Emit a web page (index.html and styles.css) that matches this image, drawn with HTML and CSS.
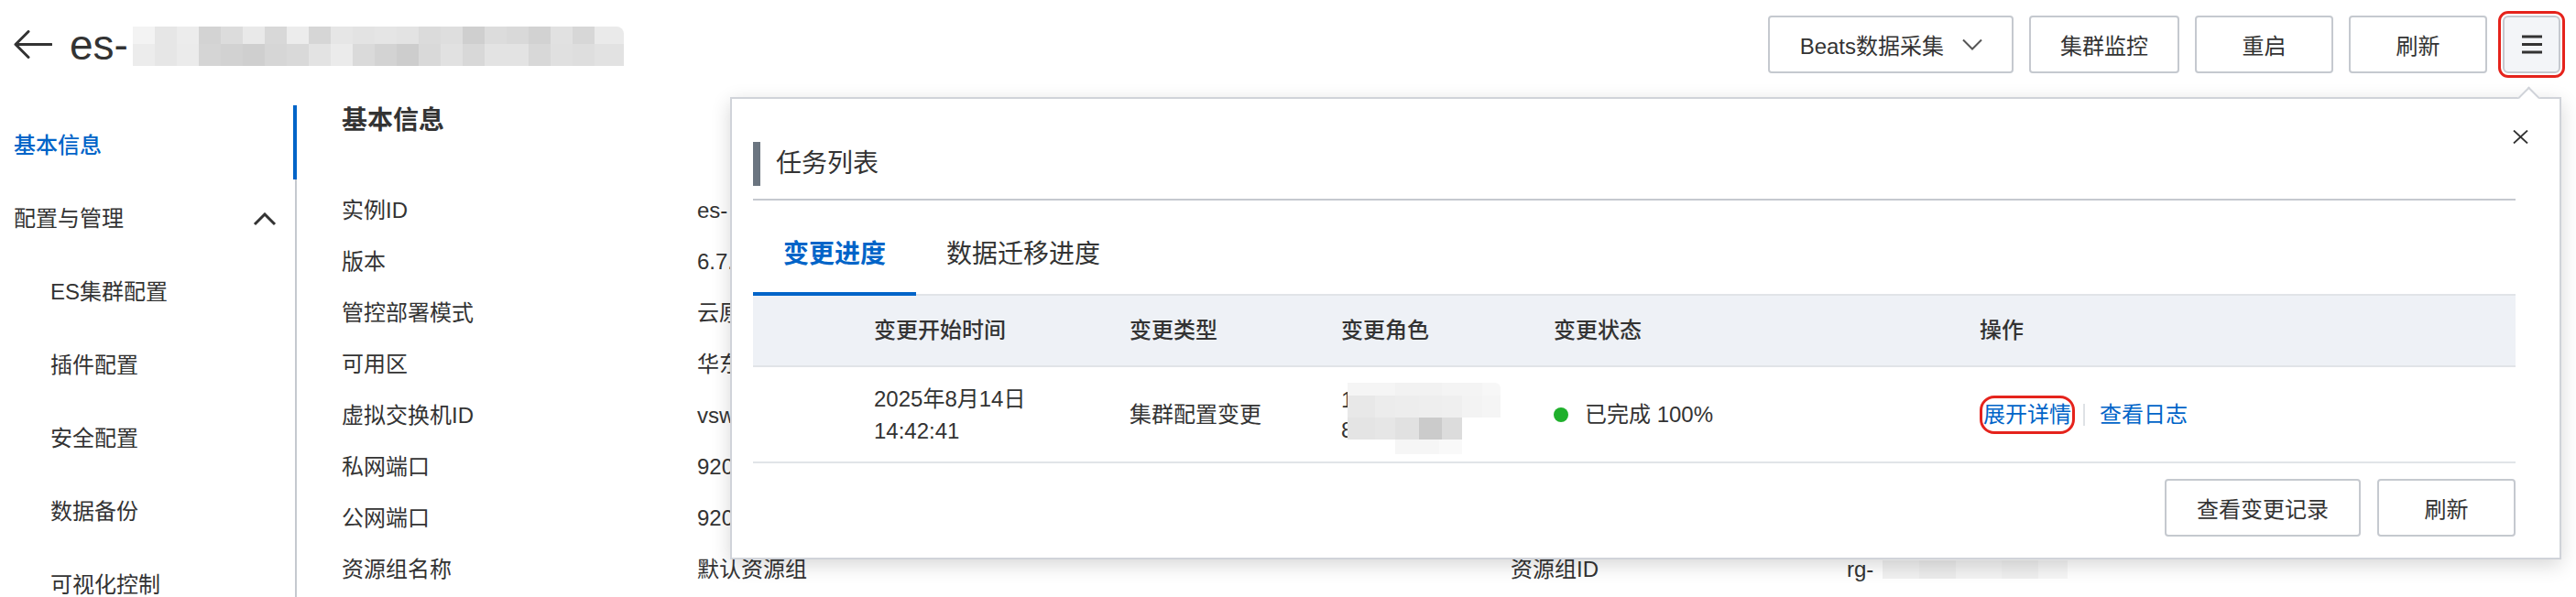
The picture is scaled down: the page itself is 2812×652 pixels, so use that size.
FILE: index.html
```html
<!DOCTYPE html>
<html lang="zh-CN">
<head>
<meta charset="utf-8">
<title>es- 基本信息</title>
<link rel="stylesheet" href="styles.css">
</head>
<body>
<div class="page">
  <header class="topbar">
    <svg class="back" viewBox="0 0 43 31" width="43" height="31"><path d="M42 15.5H3M17 1.5L3 15.5L17 29.5" fill="none" stroke="#333" stroke-width="3" stroke-linecap="round" stroke-linejoin="round"/></svg>
    <div class="title">
      <span class="title-text">es-</span>
      <span class="blur-title"><span class="br br-a"></span><span class="br br-b"></span></span>
    </div>
    <div class="actions">
      <button class="btn btn-drop">Beats数据采集<svg class="chev-down" viewBox="0 0 22 13" width="22" height="13"><polyline points="1,1.5 11,11.5 21,1.5" fill="none" stroke="#555" stroke-width="2"/></svg></button>
      <button class="btn">集群监控</button>
      <button class="btn">重启</button>
      <button class="btn">刷新</button>
      <button class="btn btn-menu"><svg viewBox="0 0 22 21" width="22" height="21"><path d="M0 2H22M0 10.5H22M0 19H22" stroke="#333" stroke-width="3"/></svg></button>
    </div>
  </header>

  <div class="main">
    <nav class="side">
      <div class="nav-item active">基本信息</div>
      <div class="nav-item group">配置与管理<svg class="chev-up" viewBox="0 0 26 15" width="26" height="15"><polyline points="2,13 13,2 24,13" fill="none" stroke="#333" stroke-width="3"/></svg></div>
      <div class="nav-item sub">ES集群配置</div>
      <div class="nav-item sub">插件配置</div>
      <div class="nav-item sub">安全配置</div>
      <div class="nav-item sub">数据备份</div>
      <div class="nav-item sub">可视化控制</div>
    </nav>
    <section class="content">
      <h2 class="content-title">基本信息</h2>
      <div class="info-grid">
        <div class="lbl">实例ID</div><div class="val">es-</div><div></div><div></div>
        <div class="lbl">版本</div><div class="val">6.7.</div><div></div><div></div>
        <div class="lbl">管控部署模式</div><div class="val">云原</div><div></div><div></div>
        <div class="lbl">可用区</div><div class="val">华东</div><div></div><div></div>
        <div class="lbl">虚拟交换机ID</div><div class="val">vsw</div><div></div><div></div>
        <div class="lbl">私网端口</div><div class="val">920</div><div></div><div></div>
        <div class="lbl">公网端口</div><div class="val">920</div><div></div><div></div>
        <div class="lbl">资源组名称</div><div class="val">默认资源组</div><div class="lbl">资源组ID</div><div class="val rg">rg-<span class="rg-blur"></span></div>
      </div>
    </section>
  </div>

  <div class="popover">
    <span class="pop-arrow"></span>
    <svg class="pop-close" viewBox="0 0 17 15" width="17" height="15"><path d="M1 0.5L16 14.5M16 0.5L1 14.5" stroke="#333" stroke-width="1.8"/></svg>
    <div class="pop-title"><span class="pop-bar"></span><span class="pop-title-text">任务列表</span></div>
    <div class="pop-divider"></div>
    <div class="tabs">
      <div class="tab active">变更进度</div>
      <div class="tab">数据迁移进度</div>
    </div>
    <div class="tbl-head">
      <div></div>
      <div>变更开始时间</div>
      <div>变更类型</div>
      <div>变更角色</div>
      <div>变更状态</div>
      <div>操作</div>
    </div>
    <div class="tbl-row">
      <div></div>
      <div class="cell-date">2025年8月14日<br>14:42:41</div>
      <div>集群配置变更</div>
      <div class="role">1<br>8
        <span class="role-blur"><span class="rb rb-a"></span><span class="rb rb-b"></span><span class="rb rb-c"></span><span class="rb rb-d"></span></span>
      </div>
      <div class="status"><span class="dot"></span>已完成 100%</div>
      <div class="ops"><span class="link hl">展开详情</span><span class="sep"></span><span class="link">查看日志</span></div>
    </div>
    <div class="pop-foot">
      <button class="btn btn-wide">查看变更记录</button>
      <button class="btn">刷新</button>
    </div>
  </div>
</div>
</body>
</html>
```

FILE: styles.css
```css
* { box-sizing: border-box; }
html, body { margin: 0; padding: 0; overflow: hidden; background: #fff; }
body {
  font-family: "Liberation Sans", "Noto Sans CJK SC", sans-serif;
  color: #333;
  font-size: 24px;
  line-height: 1.4;
}
.page { position: relative; width: 2812px; height: 652px; overflow: hidden; }

/* top bar */
.topbar { display: flex; align-items: center; height: 97px; padding: 0 17px 0 14px; }
.back { flex: none; display: block; }
.title { display: flex; align-items: center; margin-left: 19px; }
.title-text { font-size: 46px; line-height: 52px; color: #333; }
.blur-title { display: flex; flex-direction: column; width: 536px; height: 43px; margin-left: 5px; margin-top: 3px; }
.br { display: block; }
.br-a {
  height: 19px;
  border-top-right-radius: 8px;
  background: linear-gradient(to right,
    #f3f3f3 0 24px, #e6e6e6 24px 48px, #ececec 48px 72px, #d3d3d3 72px 96px, #dcdcdc 96px 120px,
    #e9e9e9 120px 144px, #d8d8d8 144px 168px, #ececec 168px 192px, #d6d6d6 192px 216px, #e6e6e6 216px 240px,
    #e3e3e3 240px 264px, #e5e5e5 264px 288px, #e3e3e3 288px 312px, #dbdbdb 312px 336px, #dedede 336px 360px,
    #cfcfcf 360px 384px, #dcdcdc 384px 408px, #d9d9d9 408px 432px, #d2d2d2 432px 456px, #e1e1e1 456px 480px,
    #d7d7d7 480px 504px, #eaeaea 504px 536px);
}
.br-b {
  height: 24px;
  background: linear-gradient(to right,
    #ececec 0 24px, #e6e6e6 24px 48px, #ebebeb 48px 72px, #d5d5d5 72px 96px, #d2d2d2 96px 120px,
    #cfcfcf 120px 144px, #d6d6d6 144px 168px, #d9d9d9 168px 192px, #e3e3e3 192px 216px, #ebebeb 216px 240px,
    #dadada 240px 264px, #d3d3d3 264px 288px, #cdcdcd 288px 312px, #d9d9d9 312px 336px, #e1e1e1 336px 360px,
    #d8d8d8 360px 384px, #e3e3e3 384px 408px, #e3e3e3 408px 432px, #d8d8d8 432px 456px, #e0e0e0 456px 480px,
    #dedede 480px 504px, #e2e2e2 504px 536px);
}
.actions { margin-left: auto; display: flex; align-items: center; gap: 17px; }

.btn {
  height: 63px;
  min-width: 151px;
  padding: 0 32px;
  border: 2px solid #c5c9cf;
  border-radius: 4px;
  background: #fff;
  font-family: inherit;
  font-size: 24px;
  color: #333;
  display: flex;
  align-items: center;
  justify-content: center;
  white-space: nowrap;
}
.btn-drop { padding: 0 32px 0 33px; }
.chev-down { margin-left: 20px; display: block; }
.btn-menu {
  min-width: 0;
  width: 63px;
  padding: 0;
  background: #f3f5f8;
  border-radius: 6px;
  outline: 3px solid #e5231c;
  outline-offset: 2px;
}
.btn-menu svg { display: block; }
.btn-wide { padding: 0 33px; }

/* main area */
.main { display: flex; margin-top: 19px; }
.side {
  width: 324px;
  flex: none;
  border-right: 2px solid #c5c9cf;
  padding-top: 3px;
}
.nav-item {
  position: relative;
  height: 80px;
  display: flex;
  align-items: center;
  padding: 0 20px 0 15px;
  font-size: 24px;
  color: #333;
}
.nav-item.active { color: #0064c8; font-weight: 500; }
.nav-item.active::after {
  content: "";
  position: absolute;
  right: -2px;
  top: -4px;
  width: 4px;
  height: 81px;
  background: #0064c8;
}
.nav-item.group { justify-content: space-between; }
.chev-up { display: block; }
.nav-item.sub { padding-left: 55px; }

.content { flex: 1; padding-left: 49px; }
.content-title { margin: 0; font-size: 28px; line-height: 32px; font-weight: 700; color: #333; }
.info-grid {
  display: grid;
  grid-template-columns: 388px 888px 367px 1fr;
  grid-auto-rows: 56px;
  align-items: center;
  margin-top: 54px;
}
.lbl, .val { font-size: 24px; color: #333; white-space: nowrap; }
.rg { display: flex; align-items: center; }
.rg-blur {
  display: inline-block;
  width: 202px;
  height: 20px;
  margin-left: 10px;
  background: linear-gradient(to right, #f1f1f1 0 40px, #ececec 40px 80px, #f3f3f3 80px 130px, #efefef 130px 170px, #f6f6f6 170px 202px);
}

/* popover */
.popover {
  position: absolute;
  left: 797px;
  top: 106px;
  width: 1999px;
  height: 505px;
  border: 2px solid #d0d3d9;
  background: #fff;
  box-shadow: 0 6px 20px rgba(0, 0, 0, 0.16);
  padding: 47px 48px 23px 23px;
  z-index: 5;
}
.pop-arrow {
  position: absolute;
  top: -10px;
  left: 1953px;
  width: 17px;
  height: 17px;
  background: #fff;
  border-top: 2px solid #d0d3d9;
  border-left: 2px solid #d0d3d9;
  transform: rotate(45deg);
}
.pop-close { position: absolute; top: 34px; right: 34px; display: block; }
.pop-title { display: flex; align-items: center; height: 48px; }
.pop-bar { width: 8px; height: 48px; background: #6b7580; }
.pop-title-text { margin-left: 17px; font-size: 28px; color: #333; }
.pop-divider { height: 2px; background: #c5c9cf; margin-top: 14px; }

.tabs { display: flex; height: 104px; border-bottom: 2px solid #e1e4e8; }
.tab {
  height: 104px;
  margin-bottom: -2px;
  padding: 18px 33px 0;
  display: flex;
  align-items: center;
  font-size: 28px;
  color: #333;
  border-bottom: 4px solid transparent;
}
.tab.active { color: #0064c8; font-weight: 700; border-bottom-color: #0064c8; }

.tbl-head, .tbl-row {
  display: grid;
  grid-template-columns: 132px 279px 231px 232px 465px 1fr;
  align-items: center;
  font-size: 24px;
  color: #333;
}
.tbl-head { height: 78px; background: #eef1f6; border-bottom: 2px solid #e1e4e8; font-weight: 500; }
.tbl-row { height: 105px; border-bottom: 2px solid #e1e4e8; }
.cell-date { line-height: 35px; }
.role { position: relative; line-height: 33px; }
.role-blur { position: absolute; left: 7px; top: -2px; display: flex; flex-direction: column; }
.rb { display: block; }
.rb-a {
  width: 167px; height: 14px; border-top-right-radius: 6px;
  background: linear-gradient(to right, #f5f5f5 0 52px, #f2f2f2 52px 103px, #f4f4f4 103px 147px, #f7f7f7 147px 167px);
}
.rb-b {
  width: 167px; height: 24px;
  background: linear-gradient(to right, #e8e8e8 0 30px, #ececec 30px 52px, #ededed 52px 78px, #eeeeee 78px 103px, #efefef 103px 125px, #f3f3f3 125px 147px, #f5f5f5 147px 167px);
}
.rb-c {
  width: 125px; height: 24px;
  background: linear-gradient(to right, #e4e4e4 0 30px, #e6e6e6 30px 52px, #e1e1e1 52px 78px, #cbcbcb 78px 103px, #dcdcdc 103px 125px);
}
.rb-d {
  width: 73px; height: 16px; margin-left: 52px;
  background: linear-gradient(to right, #f6f6f6 0 48px, #f9f9f9 48px 73px);
}
.status { display: flex; align-items: center; }
.dot { width: 16px; height: 16px; border-radius: 50%; background: #1fb02c; margin-right: 18px; flex: none; }
.ops { display: flex; align-items: center; }
.link { color: #0064c8; line-height: 36px; }
.hl { border: 3px solid #e5231c; border-radius: 16px; padding: 0 1px; }
.sep { width: 2px; height: 24px; background: #dfe2e6; margin: 0 16px 0 9px; }
.pop-foot { display: flex; justify-content: flex-end; gap: 18px; margin-top: 17px; }
```
